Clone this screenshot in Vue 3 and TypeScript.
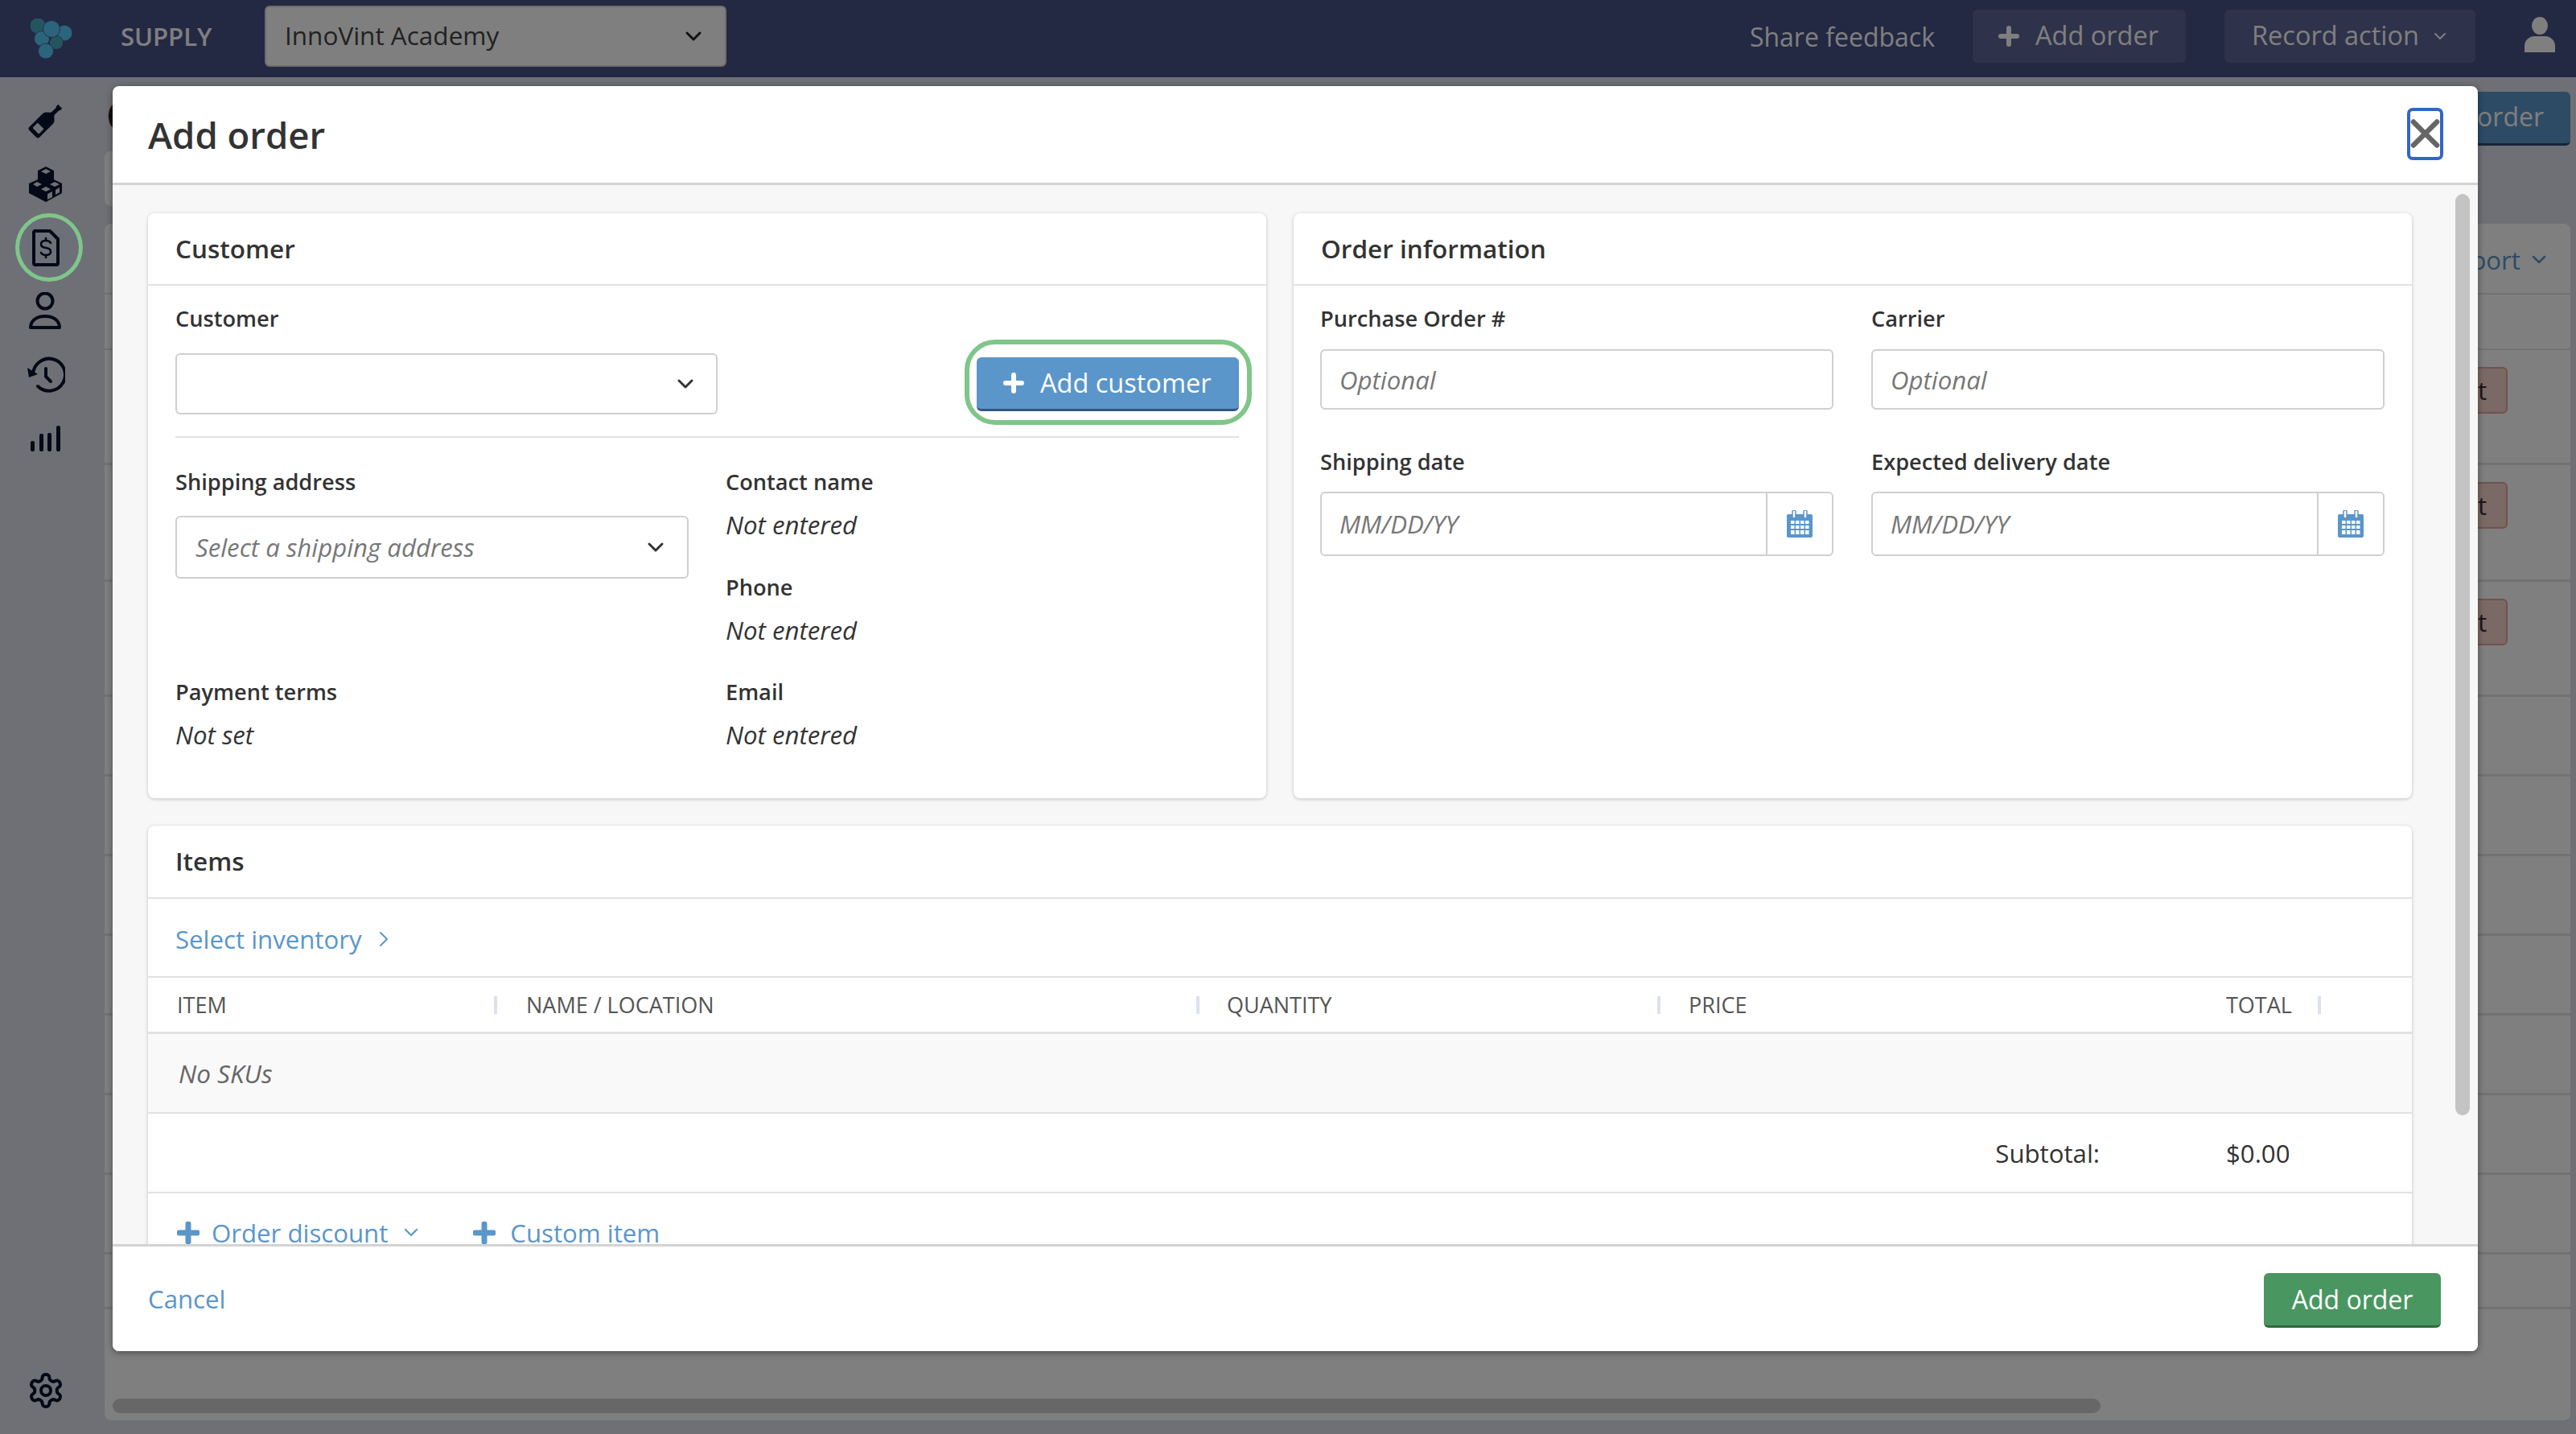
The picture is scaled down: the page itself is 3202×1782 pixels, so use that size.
<script setup lang="ts">
interface BgRow {
  height: number
  action: boolean
}

const bgRows: BgRow[] = [
  { height: 143, action: true },
  { height: 145, action: true },
  { height: 143, action: true },
  { height: 99, action: false },
  { height: 99, action: false },
  { height: 99, action: false },
  { height: 99, action: false },
  { height: 99, action: false },
  { height: 99, action: false },
  { height: 99, action: false },
  { height: 68, action: false },
]

const contactFields = [
  { label: 'Contact name', value: 'Not entered' },
  { label: 'Phone', value: 'Not entered' },
  { label: 'Email', value: 'Not entered' },
]

const dateFields = ['Shipping date', 'Expected delivery date']
const textFields = ['Purchase Order #', 'Carrier']

const columns = ['ITEM', 'NAME / LOCATION', 'QUANTITY', 'PRICE', 'TOTAL']
</script>

<template>
  <div class="app">
    <header class="topbar">
      <svg class="logo" viewBox="38 20 52 51" width="52" height="51">
        <circle cx="47" cy="29" r="9.5" fill="#48aabe" />
        <circle cx="80" cy="38" r="9.5" fill="#58c8f8" />
        <circle cx="70" cy="50" r="8.5" fill="#48aabe" stroke="#465086" stroke-width="0.8" />
        <circle cx="52" cy="45" r="9.5" fill="#58c8f8" stroke="#465086" stroke-width="0.8" />
        <circle cx="64" cy="33" r="10.5" fill="#58c8f8" stroke="#465086" stroke-width="0.8" />
        <circle cx="57" cy="60.500" r="9.500" fill="#58c8f8" stroke="#465086" stroke-width="0.8" />
      </svg>
      <span class="brand">SUPPLY</span>
      <div class="org-select">
        <span>InnoVint Academy</span>
        <svg width="22" height="14" viewBox="0 0 22 14"><path d="M3 3l8 8 8-8" fill="none" stroke="#222" stroke-width="3" stroke-linecap="round" stroke-linejoin="round" /></svg>
      </div>
      <span class="spacer"></span>
      <span class="feedback">Share feedback</span>
      <div class="top-btn add">
        <svg width="26" height="26" viewBox="0 0 26 26"><path d="M13 3v20M3 13h20" stroke="#fff" stroke-width="6" stroke-linecap="round" /></svg>
        <span>Add order</span>
      </div>
      <div class="top-btn record">
        <span>Record action</span>
        <svg width="16" height="10" viewBox="0 0 16 10"><path d="M2 2l6 6 6-6" fill="none" stroke="#fff" stroke-width="2" stroke-linecap="round" stroke-linejoin="round" /></svg>
      </div>
      <svg class="user" width="38" height="44" viewBox="0 0 38 44">
        <ellipse cx="19" cy="11" rx="10" ry="11" fill="#fff" />
        <path d="M0 44v-8c0-7 6-12 12-12h14c6 0 12 5 12 12v8z" fill="#fff" />
      </svg>
    </header>

    <div class="shell">
      <nav class="sidebar">
        <div class="nav-item">
          <svg width="44" height="44" viewBox="0 0 44 44">
            <g transform="rotate(45 22 22)">
              <path d="M18.500 -3h7v4h-1v8c0 3 6.500 4 6.500 10v23a3 3 0 0 1-3 3H16a3 3 0 0 1-3-3V19c0-6 6.500-7 6.500-10V1h-1z" fill="#06132e" />
              <rect x="16.500" y="31" width="11" height="9" rx="1" fill="#dfe1ea" />
            </g>
          </svg>
        </div>
        <div class="nav-item">
          <svg width="44" height="44" viewBox="0 0 44 44">
            <path d="M22 0l10 5v11l10 5v12l-20 11L1 33V21l11-5V5z" fill="#06132e" />
            <path d="M22 3l6 3-6 3-6-3zM11 19l6 3-6 3-5-3zM33 19l6 3-6 3-6-3zM22 25l6 3-6 3-6-3z" fill="#dfe1ea" />
            <path d="M24 34l6-3v7l-6 3zM34 29l5-3v6l-5 3z" fill="#dfe1ea" />
          </svg>
        </div>
        <div class="nav-item active">
          <svg width="36" height="48" viewBox="0 0 36 48">
            <path d="M6 3h17l10 10v30a2 2 0 0 1-2 2H6a2 2 0 0 1-3-2V5a2 2 0 0 1 3-2z" fill="none" stroke="#06132e" stroke-width="4" stroke-linejoin="round" />
            <path d="M24 18c-1-2-3-3-6-3-4 0-6 2-6 4.500s2 4 6 4.500 6 2 6 4.500-2 4.500-6 4.500c-3 0-5-1-6-3M18 12v3M18 33v3" fill="none" stroke="#06132e" stroke-width="2.600" stroke-linecap="round" />
          </svg>
          <span class="nav-ring"></span>
        </div>
        <div class="nav-item">
          <svg width="44" height="48" viewBox="0 0 44 48">
            <circle cx="21" cy="11" r="9.500" fill="none" stroke="#06132e" stroke-width="4" />
            <path d="M3 44c0-9 8-14 18-14s18 5 18 14z" fill="none" stroke="#06132e" stroke-width="4" stroke-linejoin="round" />
          </svg>
        </div>
        <div class="nav-item">
          <svg width="48" height="46" viewBox="0 0 48 46">
            <path d="M8 22a20 20 0 1 1 6 15" fill="none" stroke="#06132e" stroke-width="4" stroke-linecap="round" />
            <path d="M1 14l2 12 11-4z" fill="#06132e" />
            <path d="M24 15v10l6 6" fill="none" stroke="#06132e" stroke-width="4" stroke-linecap="round" />
          </svg>
        </div>
        <div class="nav-item">
          <svg width="38" height="32" viewBox="0 0 38 32">
            <rect x="0" y="19" width="5" height="13" rx="2" fill="#06132e" />
            <rect x="11" y="10" width="5" height="22" rx="2" fill="#06132e" />
            <rect x="21" y="9" width="5" height="23" rx="2" fill="#06132e" />
            <rect x="32" y="0" width="5" height="32" rx="2" fill="#06132e" />
          </svg>
        </div>
        <div class="nav-item gear">
          <svg width="48" height="48" viewBox="0 0 24 24" fill="none" stroke="#06132e" stroke-width="2" stroke-linecap="round" stroke-linejoin="round">
            <path d="M12.220 2h-.44a2 2 0 0 0-2 2v.18a2 2 0 0 1-1 1.730l-.43.25a2 2 0 0 1-2 0l-.15-.08a2 2 0 0 0-2.730.73l-.22.38a2 2 0 0 0 .73 2.730l.15.1a2 2 0 0 1 1 1.720v.51a2 2 0 0 1-1 1.740l-.15.09a2 2 0 0 0-.73 2.730l.22.38a2 2 0 0 0 2.730.73l.15-.08a2 2 0 0 1 2 0l.43.25a2 2 0 0 1 1 1.730V20a2 2 0 0 0 2 2h.44a2 2 0 0 0 2-2v-.18a2 2 0 0 1 1-1.730l.43-.25a2 2 0 0 1 2 0l.15.08a2 2 0 0 0 2.730-.73l.22-.39a2 2 0 0 0-.73-2.730l-.15-.08a2 2 0 0 1-1-1.740v-.5a2 2 0 0 1 1-1.740l.15-.09a2 2 0 0 0 .73-2.730l-.22-.38a2 2 0 0 0-2.730-.73l-.15.08a2 2 0 0 1-2 0l-.43-.25a2 2 0 0 1-1-1.730V4a2 2 0 0 0-2-2z" />
            <circle cx="12" cy="12" r="3" />
          </svg>
        </div>
      </nav>

      <main class="page">
        <div class="page-head">
          <h1>Orders</h1>
          <div class="page-btn">Add order</div>
        </div>
        <div class="filter-box"></div>
        <section class="page-card">
          <div class="page-card-head">
            <span>Export</span>
            <svg width="18" height="12" viewBox="0 0 18 12"><path d="M2 2l7 7 7-7" fill="none" stroke="#5a96ca" stroke-width="2.500" stroke-linecap="round" stroke-linejoin="round" /></svg>
          </div>
          <div class="page-card-sub"></div>
          <div v-for="(row, i) in bgRows" :key="i" class="bg-row" :style="{ height: row.height + 'px' }">
            <span class="bg-cell"></span>
            <span v-if="row.action" class="bg-action">Reject</span>
          </div>
          <div class="h-scroll"></div>
        </section>
      </main>
    </div>

    <div class="backdrop"></div>

    <div class="modal">
      <div class="modal-head">
        <h2>Add order</h2>
        <button class="close" type="button">
          <svg width="38" height="36" viewBox="0 0 38 36"><path d="M4 3l30 30M34 3L4 33" stroke="#666" stroke-width="6.500" stroke-linecap="round" /></svg>
        </button>
      </div>

      <div class="modal-body">
        <div class="two-col">
          <section class="card">
            <h3 class="card-title">Customer</h3>
            <div class="customer-body">
              <div class="customer-top">
                <div>
                  <div class="label">Customer</div>
                  <div class="select customer-select">
                    <span></span>
                    <svg width="22" height="14" viewBox="0 0 22 14"><path d="M3 3l8 8 8-8" fill="none" stroke="#333" stroke-width="3" stroke-linecap="round" stroke-linejoin="round" /></svg>
                  </div>
                </div>
                <div class="add-customer">
                  <svg width="26" height="26" viewBox="0 0 26 26"><path d="M13 3v20M3 13h20" stroke="#fff" stroke-width="6" stroke-linecap="round" /></svg>
                  <span>Add customer</span>
                  <i class="btn-ring"></i>
                </div>
              </div>
              <div class="customer-grid">
                <div class="cell">
                  <div class="label">Shipping address</div>
                  <div class="select address-select">
                    <span class="placeholder">Select a shipping address</span>
                    <svg width="22" height="14" viewBox="0 0 22 14"><path d="M3 3l8 8 8-8" fill="none" stroke="#333" stroke-width="3" stroke-linecap="round" stroke-linejoin="round" /></svg>
                  </div>
                </div>
                <div class="cell">
                  <div class="label">{{ contactFields[0].label }}</div>
                  <div class="value">{{ contactFields[0].value }}</div>
                </div>
                <div class="cell"></div>
                <div class="cell">
                  <div class="label">{{ contactFields[1].label }}</div>
                  <div class="value">{{ contactFields[1].value }}</div>
                </div>
                <div class="cell">
                  <div class="label">Payment terms</div>
                  <div class="value">Not set</div>
                </div>
                <div class="cell">
                  <div class="label">{{ contactFields[2].label }}</div>
                  <div class="value">{{ contactFields[2].value }}</div>
                </div>
              </div>
            </div>
          </section>

          <section class="card">
            <h3 class="card-title">Order information</h3>
            <div class="order-body">
              <div v-for="f in textFields" :key="f">
                <div class="label">{{ f }}</div>
                <input class="text-input" type="text" placeholder="Optional" readonly />
              </div>
              <div v-for="f in dateFields" :key="f" class="date-field">
                <div class="label">{{ f }}</div>
                <div class="date-input">
                  <input type="text" placeholder="MM/DD/YY" readonly />
                  <span class="date-addon">
                    <svg width="32" height="34" viewBox="0 0 32 34">
                      <path d="M2 5h28a2 2 0 0 1 2 2v25a2 2 0 0 1-2 2H2a2 2 0 0 1-2-2V7a2 2 0 0 1 2-2z" fill="#5a96ca" />
                      <path d="M5 13h4.500v4H5zM11 13h4.500v4H11zM17 13h4.500v4H17zM23 13h4.500v4H23zM5 19h4.500v4H5zM11 19h4.500v4H11zM17 19h4.500v4H17zM23 19h4.500v4H23zM5 25h4.500v5H5zM11 25h4.500v5H11zM17 25h4.500v5H17zM23 25h4.500v5H23z" fill="#fff" />
                      <rect x="7" y="0" width="4" height="10" rx="2" fill="#fff" stroke="#5a96ca" stroke-width="1.500" />
                      <rect x="21" y="0" width="4" height="10" rx="2" fill="#fff" stroke="#5a96ca" stroke-width="1.500" />
                    </svg>
                  </span>
                </div>
              </div>
            </div>
          </section>
        </div>

        <section class="card items">
          <h3 class="card-title">Items</h3>
          <div class="inventory-row">
            <span>Select inventory</span>
            <svg width="14" height="22" viewBox="0 0 14 22"><path d="M3 3l8 8-8 8" fill="none" stroke="#5a96ca" stroke-width="2" stroke-linecap="round" stroke-linejoin="round" /></svg>
          </div>
          <div class="table-head">
            <div v-for="c in columns" :key="c" class="th">{{ c }}</div>
          </div>
          <div class="empty-row">No SKUs</div>
          <div class="subtotal-row">
            <span class="subtotal-label">Subtotal:</span>
            <span class="subtotal-value">$0.00</span>
          </div>
          <div class="item-actions">
            <span class="item-link">
              <svg width="28" height="28" viewBox="0 0 28 28"><path d="M14 3v22M3 14h22" stroke="#5a96ca" stroke-width="7" stroke-linecap="round" /></svg>
              Order discount
              <svg class="small-chev" width="18" height="12" viewBox="0 0 18 12"><path d="M2 2l7 7 7-7" fill="none" stroke="#5a96ca" stroke-width="2.200" stroke-linecap="round" stroke-linejoin="round" /></svg>
            </span>
            <span class="item-link custom">
              <svg width="28" height="28" viewBox="0 0 28 28"><path d="M14 3v22M3 14h22" stroke="#5a96ca" stroke-width="7" stroke-linecap="round" /></svg>
              Custom item
            </span>
          </div>
        </section>
        <div class="v-scroll"></div>
      </div>

      <div class="modal-foot">
        <span class="cancel">Cancel</span>
        <div class="submit">Add order</div>
      </div>
    </div>
  </div>
</template>

<style scoped>
.app {
  position: relative;
  width: 3202px;
  height: 1782px;
  overflow: hidden;
  display: flex;
  flex-direction: column;
  background: #dfe1ea;
  font-family: 'Open Sans', 'Liberation Sans', sans-serif;
  font-size: 31.2px;
  color: #333;
}

/* page behind the dialog */
.topbar {
  height: 96px;
  flex: none;
  display: flex;
  align-items: center;
  background: #465086;
  color: #fff;
  box-sizing: border-box;
}
.logo {
  margin-left: 38px;
}
.brand {
  margin-left: 60px;
  width: 118px;
  font-size: 31px;
  font-weight: 600;
  margin-top: -7px;
}
.org-select {
  margin-left: 61px;
  width: 574px;
  height: 76px;
  margin-top: -6px;
  box-sizing: border-box;
  display: flex;
  align-items: center;
  justify-content: space-between;
  padding: 0 28px 0 23px;
  background: #fff;
  border: 2px solid #d8d8d8;
  border-radius: 6px;
  color: #444;
  font-size: 31.5px;
}
.org-select span {
  margin-top: -4px;
}
.spacer {
  flex: 1;
}
.feedback {
  font-size: 32px;
  margin-right: 47px;
  margin-top: -6px;
}
.top-btn {
  height: 66px;
  margin-top: -6px;
  box-sizing: border-box;
  display: flex;
  align-items: center;
  gap: 20px;
  background: rgba(255, 255, 255, 0.12);
  border-radius: 6px;
  font-size: 32.5px;
}
.top-btn span {
  margin-top: -4px;
}
.top-btn.add {
  width: 265px;
  padding-left: 32px;
}
.top-btn.record {
  width: 312px;
  margin-left: 48px;
  padding-left: 34px;
  gap: 18px;
}
.user {
  margin-left: 61px;
  margin-right: 26px;
  margin-top: -10px;
}

.shell {
  flex: 1;
  display: flex;
  min-height: 0;
}
.sidebar {
  width: 130px;
  flex: none;
  display: flex;
  flex-direction: column;
  padding-top: 14px;
  box-sizing: border-box;
}
.nav-item {
  position: relative;
  width: 82px;
  height: 67px;
  margin: 6px 0 6px 16px;
  display: flex;
  align-items: center;
  justify-content: center;
  border-radius: 10px;
}
.nav-item.active {
  background: #dae0f0;
}
.nav-item.gear {
  margin-top: auto;
  margin-bottom: 21px;
}
.nav-ring {
  position: absolute;
  left: 3px;
  top: -9px;
  width: 84px;
  height: 85px;
  box-sizing: border-box;
  border: 5px solid #7fc68a;
  border-radius: 50%;
  z-index: 5;
}
.page {
  flex: 1;
  min-width: 0;
  display: flex;
  flex-direction: column;
  padding: 18px 7px 17px 0;
  box-sizing: border-box;
}
.page-head {
  display: flex;
  justify-content: space-between;
  height: 67px;
}
.page-head h1 {
  margin: 0 0 0 2px;
  font-size: 48px;
  line-height: 60px;
  font-weight: 600;
  color: #222;
}
.page-btn {
  width: 240px;
  box-sizing: border-box;
  text-align: right;
  padding: 9px 33px 0 0;
  background: #5a96ca;
  border-bottom: 3px solid #2c4a70;
  border-radius: 6px;
  color: #fff;
  font-size: 32px;
}
.filter-box {
  margin-top: 7px;
  width: 500px;
  height: 68px;
  background: #fff;
  border-radius: 8px;
}
.page-card {
  position: relative;
  margin-top: 22px;
  flex: 1;
  background: #fff;
  border-radius: 8px;
  overflow: hidden;
}
.page-card-head {
  height: 88px;
  display: flex;
  align-items: center;
  justify-content: flex-end;
  gap: 14px;
  padding: 3px 30px 0 0;
  box-sizing: border-box;
  color: #5a96ca;
  border-bottom: 2px solid #e4e4e4;
}
.page-card-sub {
  height: 67px;
  border-bottom: 2px solid #e4e4e4;
}
.bg-row {
  display: flex;
  align-items: flex-start;
  box-sizing: border-box;
  border-bottom: 3px solid #e4e4e4;
}
.bg-row:last-of-type {
  border-bottom: 0;
}
.bg-cell {
  width: 2207px;
  align-self: stretch;
  border-right: 2px solid #e4e4e4;
}
.bg-action {
  margin: 21px 78px 0 auto;
  height: 58px;
  line-height: 54px;
  padding: 0 24px 0 12px;
  box-sizing: border-box;
  background: #f7d2ca;
  border: 2px solid #e0a59a;
  border-radius: 6px;
}
.h-scroll {
  position: absolute;
  left: 10px;
  top: 1460px;
  width: 2471px;
  height: 18px;
  border-radius: 9px;
  background: #cfcfcf;
}
.backdrop {
  position: absolute;
  inset: 0;
  background: rgba(0, 0, 0, 0.5);
}

/* dialog */
.modal {
  position: absolute;
  left: 140px;
  top: 107px;
  width: 2940px;
  height: 1572px;
  display: flex;
  flex-direction: column;
  background: #fff;
  border-radius: 8px;
  box-shadow: 0 2px 8px rgba(0, 0, 0, 0.4);
  overflow: hidden;
}
.modal-head {
  height: 123px;
  flex: none;
  box-sizing: border-box;
  display: flex;
  align-items: center;
  justify-content: space-between;
  padding: 0 43px 0 44px;
  border-bottom: 3px solid #d3d3d3;
}
.modal-head h2 {
  margin: 0;
  font-size: 45.5px;
  font-weight: 600;
  color: #333;
}
.close {
  width: 45px;
  height: 65px;
  padding: 0;
  display: flex;
  align-items: center;
  justify-content: center;
  margin-top: -2px;
  background: #fff;
  border: 4px solid #2f66c9;
  border-radius: 7px;
}
.modal-body {
  position: relative;
  flex: 1;
  min-height: 0;
  overflow: hidden;
  background: #f7f7f7;
  padding: 35px 82px 0 44px;
}
.two-col {
  display: grid;
  grid-template-columns: 1fr 1fr;
  gap: 34px;
  height: 727px;
}
.card {
  background: #fff;
  border-radius: 8px;
  box-shadow: 0 1px 4px rgba(0, 0, 0, 0.22);
}
.card-title {
  margin: 0;
  height: 90px;
  box-sizing: border-box;
  padding: 0 34px 2px;
  display: flex;
  align-items: center;
  font-size: 31.5px;
  font-weight: 600;
  color: #333;
  border-bottom: 2px solid #e2e2e2;
}
.items .card-title {
  height: 91px;
}
.label {
  font-size: 27.2px;
  line-height: 40px;
  font-weight: 600;
  color: #333;
}
.value {
  margin-top: 13px;
  line-height: 40px;
  font-style: italic;
  color: #333;
}
.select {
  box-sizing: border-box;
  display: flex;
  align-items: center;
  justify-content: space-between;
  background: #fff;
  border: 2px solid #cfcfcf;
  border-radius: 6px;
}
.placeholder {
  font-style: italic;
  color: #777;
}
.customer-body {
  padding: 21px 34px 0;
}
.customer-top {
  display: flex;
  justify-content: space-between;
  align-items: flex-start;
  height: 168px;
  box-sizing: border-box;
  border-bottom: 2px solid #e2e2e2;
}
.customer-select {
  margin-top: 23px;
  width: 674px;
  height: 76px;
  padding: 0 27px;
}
.add-customer {
  position: relative;
  margin-top: 68px;
  width: 326px;
  height: 67px;
  box-sizing: border-box;
  display: flex;
  align-items: center;
  gap: 20px;
  padding-left: 33px;
  background: #5a96ca;
  border-bottom: 3px solid #35557f;
  border-radius: 6px;
  color: #fff;
  font-size: 32.5px;
  font-weight: 500;
}
.add-customer span {
  margin-top: -2px;
}
.btn-ring {
  position: absolute;
  left: -15px;
  right: -16px;
  top: -22px;
  bottom: -20px;
  box-sizing: border-box;
  border: 6px solid #7fc68a;
  border-radius: 38px;
}
.customer-grid {
  margin-top: 35px;
  display: grid;
  grid-template-columns: 684px 1fr;
  grid-auto-rows: 130.5px;
}
.address-select {
  margin-top: 22px;
  width: 638px;
  height: 78px;
  padding: 0 28px 0 23px;
}
.order-body {
  padding: 21px 34px 0 33px;
  display: grid;
  grid-template-columns: 638px 638px;
  column-gap: 47px;
  row-gap: 45px;
}
.text-input {
  display: block;
  margin-top: 18px;
  width: 100%;
  height: 75px;
  box-sizing: border-box;
  padding: 0 22px;
  border: 2px solid #cfcfcf;
  border-radius: 6px;
  font: italic 31.2px 'Open Sans', sans-serif;
  outline: none;
}
.date-input {
  margin-top: 17px;
  height: 80px;
  box-sizing: border-box;
  display: flex;
  border: 2px solid #cfcfcf;
  border-radius: 6px;
}
.date-input input {
  flex: 1;
  min-width: 0;
  border: 0;
  background: transparent;
  padding: 0 22px;
  font: italic 31.2px 'Open Sans', sans-serif;
  outline: none;
}
.text-input::placeholder,
.date-input input::placeholder {
  color: #777;
  opacity: 1;
}
.date-addon {
  width: 82px;
  flex: none;
  box-sizing: border-box;
  display: flex;
  align-items: center;
  justify-content: center;
  border-left: 2px solid #cfcfcf;
}
.items {
  margin-top: 34px;
  height: 640px;
}
.inventory-row {
  height: 98px;
  box-sizing: border-box;
  padding: 3px 34px 0;
  display: flex;
  align-items: center;
  gap: 20px;
  color: #5a96ca;
  border-bottom: 2px solid #e2e2e2;
}
.table-head {
  height: 70px;
  box-sizing: border-box;
  display: grid;
  grid-template-columns: 434px 873px 573px 703px 118px 1fr;
  border-bottom: 3px solid #e2e2e2;
  font-size: 27px;
  color: #555;
}
.th {
  position: relative;
  display: flex;
  align-items: center;
  padding-left: 36px;
}
.th:nth-child(3) {
  padding-left: 34px;
}
.th:nth-child(4) {
  padding-left: 35px;
}
.th:nth-child(5) {
  padding-left: 0;
}
.th::after {
  content: '';
  position: absolute;
  right: 0;
  top: 23px;
  width: 4px;
  height: 22px;
  background: #dde1ee;
}
.th:nth-child(4)::after {
  background: none;
}
.empty-row {
  height: 99px;
  box-sizing: border-box;
  display: flex;
  align-items: center;
  padding-left: 38px;
  background: #f9f9f9;
  font-style: italic;
  color: #666;
  font-size: 31.5px;
  border-bottom: 2px solid #e2e2e2;
}
.subtotal-row {
  height: 99px;
  box-sizing: border-box;
  display: flex;
  align-items: center;
  justify-content: flex-end;
  border-bottom: 2px solid #e2e2e2;
}
.subtotal-label {
  margin-right: 157px;
}
.subtotal-value {
  width: 231px;
}
.item-actions {
  display: flex;
  padding: 28px 0 0 36px;
  color: #5a96ca;
}
.item-link {
  display: inline-flex;
  align-items: center;
  gap: 15px;
}
.small-chev {
  margin-left: 5px;
}
.custom {
  margin-left: 68px;
  gap: 18px;
}
.v-scroll {
  position: absolute;
  right: 10px;
  top: 11px;
  width: 18px;
  height: 1145px;
  border-radius: 9px;
  background: #c4c4c4;
}
.modal-foot {
  height: 133px;
  flex: none;
  box-sizing: border-box;
  display: flex;
  align-items: center;
  justify-content: space-between;
  padding: 0 46px 0 44px;
  border-top: 3px solid #d3d3d3;
  background: #fff;
}
.cancel {
  color: #5a96ca;
}
.submit {
  width: 220px;
  height: 68px;
  margin-top: 3px;
  box-sizing: border-box;
  display: flex;
  align-items: center;
  justify-content: center;
  background: #4a9660;
  border-bottom: 3px solid #2e6b40;
  border-radius: 6px;
  color: #fff;
  font-size: 32px;
  font-weight: 500;
}
</style>

<style>
html,
body {
  margin: 0;
  overflow: hidden;
}
</style>
